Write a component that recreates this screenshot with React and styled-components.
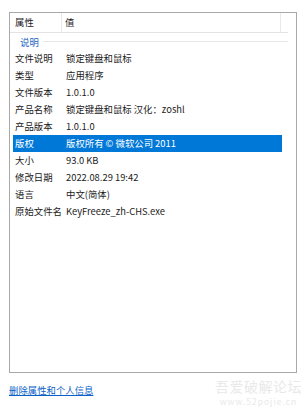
import React from 'react'
import styled, { createGlobalStyle } from 'styled-components'

const rows = [
  ['文件说明', '锁定键盘和鼠标'],
  ['类型', '应用程序'],
  ['文件版本', '1.0.1.0'],
  ['产品名称', '锁定键盘和鼠标 汉化：zoshl'],
  ['产品版本', '1.0.1.0'],
  ['版权', '版权所有 © 微软公司 2011', true],
  ['大小', '93.0 KB'],
  ['修改日期', '2022.08.29 19:42'],
  ['语言', '中文(简体)'],
  ['原始文件名', 'KeyFreeze_zh-CHS.exe'],
]

const GlobalStyle = createGlobalStyle`
  html, body {
    margin: 0;
    background: #fff;
  }
  body {
    font-family: "Noto Sans CJK SC", "Noto Sans", sans-serif;
    font-size: 9.4px;
    color: #1a1a1a;
  }
`

function App() {
  return (
    <Page>
      <GlobalStyle />
      <Frame>
        <Header>
          <HeadCell width={52} pad={5}>属性</HeadCell>
          <HeadCell width={219} pad={3}>值</HeadCell>
        </Header>
        <Group>
          <GroupTitle>说明</GroupTitle>
          <GroupLine />
        </Group>
        {rows.map(([k, v, sel]) => (
          <Row key={k} selected={sel}>
            <Label>{k}</Label>
            <Value>{v}</Value>
          </Row>
        ))}
      </Frame>
      <Footer>
        <Link href="#">删除属性和个人信息</Link>
      </Footer>
      <Watermark>
        <WmTitle>吾爱破解论坛</WmTitle>
        <WmUrl>www.52pojie.cn</WmUrl>
      </Watermark>
    </Page>
  )
}

const Page = styled.div`
  position: relative;
  width: 308px;
  height: 413px;
  padding: 12px 0 0 9px;
  box-sizing: border-box;
  overflow: hidden;
`

const Frame = styled.div`
  width: 288px;
  height: 361px;
  box-sizing: border-box;
  border: 1px solid #a9a9a9;
  display: flex;
  flex-direction: column;
`

const Header = styled.div`
  display: flex;
  height: 20px;
  margin-right: 8px;
  box-sizing: border-box;
  border-bottom: 1px solid #e3e3e3;
`

const HeadCell = styled.div`
  width: ${p => p.width}px;
  padding-left: ${p => p.pad}px;
  box-sizing: border-box;
  border-right: 1px solid #e8e8e8;
  line-height: 19px;
`

const Group = styled.div`
  display: flex;
  align-items: center;
  height: 17px;
  padding-left: 10px;
  margin-right: 8px;
`

const GroupTitle = styled.span`
  color: #1c62c4;
`

const GroupLine = styled.div`
  flex: 1;
  height: 1px;
  margin-left: 4px;
  background: #e6e6e6;
`

const Row = styled.div`
  display: flex;
  height: 17px;
  line-height: 17px;
  margin: 0 14px 0 3px;
  white-space: nowrap;
  background: ${p => (p.selected ? '#0078d7' : 'transparent')};
  color: ${p => (p.selected ? '#fff' : 'inherit')};
`

const Label = styled.div`
  width: 50px;
  padding-left: 2px;
  box-sizing: border-box;
`

const Value = styled.div`
  padding-left: 3px;
`

const Footer = styled.div`
  padding-top: 10px;
`

const Link = styled.a`
  color: #0a5fc8;
  text-decoration: underline;
`

const Watermark = styled.div`
  position: absolute;
  right: 6px;
  bottom: 7px;
  display: flex;
  flex-direction: column;
  align-items: center;
  gap: 4px;
  color: #e9e9e9;
`

const WmTitle = styled.div`
  font-size: 14px;
  line-height: 13px;
  letter-spacing: 0.5px;
`

const WmUrl = styled.div`
  font-size: 8.5px;
  line-height: 9px;
  letter-spacing: 1px;
`

export default App
